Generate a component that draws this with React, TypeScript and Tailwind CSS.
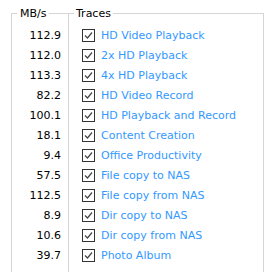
import { Fragment } from 'react';

const rows: [string, string][] = [
    ['112.9', 'HD Video Playback'],
    ['112.0', '2x HD Playback'],
    ['113.3', '4x HD Playback'],
    ['82.2', 'HD Video Record'],
    ['100.1', 'HD Playback and Record'],
    ['18.1', 'Content Creation'],
    ['9.4', 'Office Productivity'],
    ['57.5', 'File copy to NAS'],
    ['112.5', 'File copy from NAS'],
    ['8.9', 'Dir copy to NAS'],
    ['10.6', 'Dir copy from NAS'],
    ['39.7', 'Photo Album'],
];

const CheckBox = () => (
    <svg width="13" height="13" viewBox="0 0 13 13" className="shrink-0">
        <rect x="0.5" y="0.5" width="12" height="12" fill="#fff" stroke="#333" />
        <path d="M3 6.5 L5.5 9 L10 3.5" fill="none" stroke="#444" strokeWidth="1.2" />
    </svg>
);

export default function App() {
    return (
        <div className="w-[275px] h-[272px] overflow-hidden bg-white pl-[11px] pt-[7px] font-['DejaVu_Sans',sans-serif] text-[11px] leading-[13px]">
            <div className="flex">
                {/* MB/s column */}
                <fieldset className="w-[57px] h-[290px] border border-r-0 border-[#d5d5d5]">
                    <legend className="ml-[5px] px-[3px] text-black">MB/s</legend>
                    <div className="flex flex-col pt-[5px] pr-[7px]">
                        {rows.map(([v]) => (
                            <div key={v} className="h-5 flex items-center justify-end text-black">{v}</div>
                        ))}
                    </div>
                </fieldset>

                {/* Traces column */}
                <fieldset className="w-[196px] h-[290px] border border-[#d5d5d5]">
                    <legend className="ml-[5px] px-[2px] text-black">Traces</legend>
                    <div className="flex flex-col pt-[5px] pl-[13px]">
                        {rows.map(([v, label]) => (
                            <Fragment key={label}>
                                <div className="h-5 flex items-center gap-[6px]">
                                    <CheckBox />
                                    <span className="text-[#3399ff]">{label}</span>
                                </div>
                            </Fragment>
                        ))}
                    </div>
                </fieldset>
            </div>
        </div>
    );
}
